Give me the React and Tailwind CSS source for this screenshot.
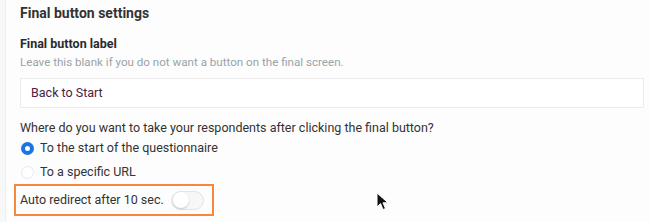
import React from 'react';

const App = () => {
  const [redirect, setRedirect] = React.useState(false);

  return (
    <div className="w-[650px] h-[222px] overflow-hidden bg-[#f8f8f8] pl-[5px] font-['Roboto',sans-serif]">
      <div className="h-full bg-[#fdfdfd] border-l border-[#efefef] pl-[14px] pr-[6px] pt-[4px] relative">
        <h2 className="text-[14px] font-bold text-[#333] leading-[18px]">Final button settings</h2>

        <div className="mt-[14px]">
          <h3 className="text-[12.5px] font-bold text-[#2b2b2b] leading-[16px]">Final button label</h3>
          <p className="text-[11.6px] text-[#9aa3a6] leading-[16px] mt-[2px]">
            Leave this blank if you do not want a button on the final screen.
          </p>
          <div className="mt-[8px] h-[30px] bg-white border border-[#ececec] flex items-center px-[10px]">
            <span className="text-[12.5px] text-[#4b2142]">Back to Start</span>
          </div>
        </div>

        <p className="mt-[11px] text-[12.5px] text-[#333] leading-[18px] whitespace-nowrap">
          Where do you want to take your respondents after clicking the final button?
        </p>

        <div className="flex flex-col -mt-[1px]">
          <label className="flex items-center gap-[6px] h-[24px]">
            <span className="w-[13px] h-[13px] rounded-full border-[4px] border-[#1a73e8] bg-white ml-[1px]" />
            <span className="text-[12.5px] text-[#333]">To the start of the questionnaire</span>
          </label>
          <label className="flex items-center gap-[6px] h-[24px]">
            <span className="w-[13px] h-[13px] rounded-full border border-[#e8e8e8] bg-white ml-[1px]" />
            <span className="text-[12.5px] text-[#333]">To a specific URL</span>
          </label>
        </div>

        <div className="-ml-[6px] w-[200px] h-[32px] border-2 border-[#f5883c] flex items-center pl-[4px] whitespace-nowrap">
          <span className="text-[12.5px] text-[#333]">Auto redirect after 10 sec.</span>
          <button
            onClick={() => setRedirect(!redirect)}
            className={`ml-[7px] w-[33px] h-[19px] rounded-full border border-[#e3e3e3] ${redirect ? 'bg-[#1a73e8]' : 'bg-[#f7f7f7]'} flex items-center px-[1px]`}
          >
            <span className={`w-[16px] h-[16px] rounded-full bg-white shadow-[0_1px_2px_rgba(0,0,0,0.2)] ${redirect ? 'ml-auto' : ''}`} />
          </button>
        </div>

        <svg className="absolute left-[370px] top-[192px]" width="14" height="20" viewBox="0 0 14 20">
          <path d="M1 1 L1 15 L4.5 11.5 L7 17.5 L9.5 16.5 L7 10.8 L12 10.8 Z" fill="#111" stroke="#fff" strokeWidth="1" />
        </svg>
      </div>
    </div>
  );
};

export default App;
